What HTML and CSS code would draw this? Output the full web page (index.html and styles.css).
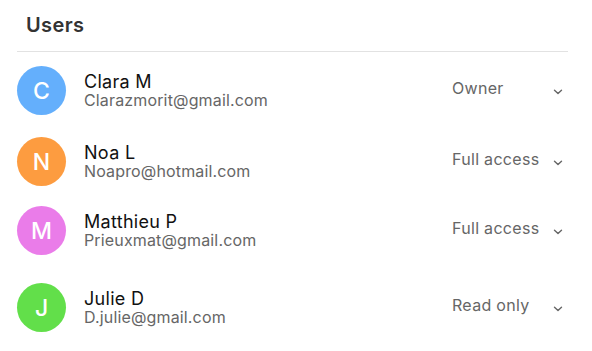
FILE: index.html
```html
<!DOCTYPE html>
<html>
<head>
<meta charset="utf-8">
<link rel="stylesheet" href="styles.css">
</head>
<body>
<section class="panel">
  <h2 class="title">Users</h2>
  <ul class="users">
    <li class="user">
      <span class="avatar avatar-blue">C</span>
      <div class="info">
        <div class="name">Clara M</div>
        <div class="email">Clarazmorit@gmail.com</div>
      </div>
      <div class="role"><span class="role-label">Owner</span>
        <svg class="chev" viewBox="0 0 10 6" width="10" height="6"><path d="M1.5 1.2 L5 4.6 L8.5 1.2"/></svg>
      </div>
    </li>
    <li class="user">
      <span class="avatar avatar-orange">N</span>
      <div class="info">
        <div class="name">Noa L</div>
        <div class="email">Noapro@hotmail.com</div>
      </div>
      <div class="role"><span class="role-label">Full access</span>
        <svg class="chev" viewBox="0 0 10 6" width="10" height="6"><path d="M1.5 1.2 L5 4.6 L8.5 1.2"/></svg>
      </div>
    </li>
    <li class="user">
      <span class="avatar avatar-pink">M</span>
      <div class="info">
        <div class="name">Matthieu P</div>
        <div class="email">Prieuxmat@gmail.com</div>
      </div>
      <div class="role"><span class="role-label">Full access</span>
        <svg class="chev" viewBox="0 0 10 6" width="10" height="6"><path d="M1.5 1.2 L5 4.6 L8.5 1.2"/></svg>
      </div>
    </li>
    <li class="user">
      <span class="avatar avatar-green">J</span>
      <div class="info">
        <div class="name">Julie D</div>
        <div class="email">D.julie@gmail.com</div>
      </div>
      <div class="role"><span class="role-label">Read only</span>
        <svg class="chev" viewBox="0 0 10 6" width="10" height="6"><path d="M1.5 1.2 L5 4.6 L8.5 1.2"/></svg>
      </div>
    </li>
  </ul>
</section>
</body>
</html>
```
FILE: styles.css
```css
* { box-sizing: border-box; }
html, body { margin: 0; padding: 0; background: #ffffff; }
body { font-family: Inter, "Noto Sans", "Liberation Sans", sans-serif; }

.panel {
  width: 551px;
  margin-left: 17px;
}

.title {
  margin: 0;
  padding: 13px 0 14px 9px;
  font-size: 20px;
  line-height: 24px;
  font-weight: 600;
  letter-spacing: 0.4px;
  color: #333333;
  border-bottom: 1px solid #e2e2e2;
}

.users {
  list-style: none;
  margin: 0;
  padding: 14px 0 0 0;
  display: flex;
  flex-direction: column;
}

.user {
  display: flex;
  align-items: center;
  height: 49px;
}
.user:nth-child(2) { margin-top: 22px; }
.user:nth-child(3) { margin-top: 20px; }
.user:nth-child(4) { margin-top: 28px; }

.avatar {
  width: 49px;
  height: 49px;
  border-radius: 50%;
  display: flex;
  align-items: center;
  justify-content: center;
  color: #ffffff;
  font-size: 23px;
  font-weight: 500;
  flex: none;
}
.avatar-blue { background: #64affc; }
.avatar-orange { background: #fd9c40; }
.avatar-pink { background: #ea7ce9; }
.avatar-green { background: #62df4a; }

.info {
  margin-left: 18px;
  flex: 1;
  display: flex;
  flex-direction: column;
}
.name {
  font-size: 18px;
  line-height: 19px;
  letter-spacing: 0.3px;
  color: #111111;
}
.email {
  font-size: 16px;
  line-height: 18px;
  letter-spacing: 0.15px;
  color: #666666;
}

.role {
  width: 111px;
  display: flex;
  align-items: center;
  margin-right: 5px;
}
.role-label {
  flex: 1;
  font-size: 16px;
  line-height: 19px;
  padding-bottom: 4px;
  letter-spacing: 0.3px;
  color: #666666;
}
.chev {
  fill: none;
  stroke: #666666;
  stroke-width: 1.4;
  stroke-linecap: round;
  stroke-linejoin: round;
  margin-top: 2px;
}
```
